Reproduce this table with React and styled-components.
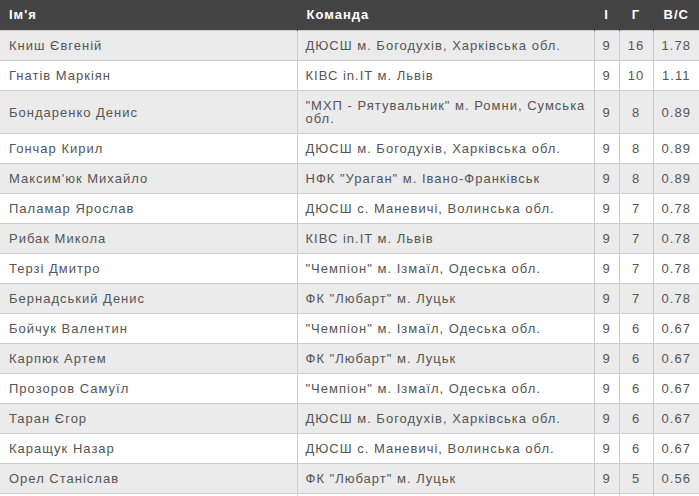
import React from 'react'
import styled, { createGlobalStyle } from 'styled-components'

const GlobalStyle = createGlobalStyle`
  body {
    margin: 0;
    background: #fff;
    font-family: "Liberation Sans", Arial, sans-serif;
  }
`

const Table = styled.table`
  width: 699px;
  table-layout: fixed;
  border-collapse: collapse;
  font-size: 13px;
  line-height: 13px;
  letter-spacing: 1px;
  color: #555;
`

const HeadCell = styled.th`
  background: #444;
  color: #fff;
  font-weight: bold;
  text-align: ${({ $center }) => ($center ? 'center' : 'left')};
  padding: ${({ $center }) => ($center ? '8px 0 9px' : '8px 8px 9px 9px')};
  height: 13px;
  border-left: 1px solid #444;
  &:first-child {
    border-left: none;
  }
`

const Row = styled.tr`
  background: ${({ $striped }) => ($striped ? '#ebebeb' : '#fff')};
`

const Cell = styled.td`
  padding: 8px 6px 8px 8px;
  height: 13px;
  border-top: 1px solid #ccc;
  border-bottom: 1px solid #ccc;
  border-left: 1px solid #ccc;
  vertical-align: middle;
  &:first-child {
    border-left: none;
    padding-left: 9px;
  }
`

const NumCell = styled(Cell)`
  text-align: center;
  padding-left: 0;
  padding-right: 0;
`

const rows = [
  ['Книш Євгеній', 'ДЮСШ м. Богодухів, Харківська обл.', 9, 16, '1.78'],
  ['Гнатів Маркіян', 'КІВС in.IT м. Львів', 9, 10, '1.11'],
  ['Бондаренко Денис', '"МХП - Рятувальник" м. Ромни, Сумська обл.', 9, 8, '0.89'],
  ['Гончар Кирил', 'ДЮСШ м. Богодухів, Харківська обл.', 9, 8, '0.89'],
  ["Максим'юк Михайло", 'НФК "Ураган" м. Івано-Франківськ', 9, 8, '0.89'],
  ['Паламар Ярослав', 'ДЮСШ с. Маневичі, Волинська обл.', 9, 7, '0.78'],
  ['Рибак Микола', 'КІВС in.IT м. Львів', 9, 7, '0.78'],
  ['Терзі Дмитро', '"Чемпіон" м. Ізмаїл, Одеська обл.', 9, 7, '0.78'],
  ['Бернадський Денис', 'ФК "Любарт" м. Луцьк', 9, 7, '0.78'],
  ['Бойчук Валентин', '"Чемпіон" м. Ізмаїл, Одеська обл.', 9, 6, '0.67'],
  ['Карпюк Артем', 'ФК "Любарт" м. Луцьк', 9, 6, '0.67'],
  ['Прозоров Самуїл', '"Чемпіон" м. Ізмаїл, Одеська обл.', 9, 6, '0.67'],
  ['Таран Єгор', 'ДЮСШ м. Богодухів, Харківська обл.', 9, 6, '0.67'],
  ['Каращук Назар', 'ДЮСШ с. Маневичі, Волинська обл.', 9, 6, '0.67'],
  ['Орел Станіслав', 'ФК "Любарт" м. Луцьк', 9, 5, '0.56'],
  ['Мельник Олег', 'ФК "Любарт" м. Луцьк', 9, 5, '0.56']
]

export default function App() {
  return (
    <>
      <GlobalStyle />
      <Table>
        <colgroup>
          <col style={{ width: 297 }} />
          <col style={{ width: 297 }} />
          <col style={{ width: 25 }} />
          <col style={{ width: 34 }} />
          <col style={{ width: 46 }} />
        </colgroup>
        <thead>
          <tr>
            <HeadCell>Ім'я</HeadCell>
            <HeadCell>Команда</HeadCell>
            <HeadCell $center>І</HeadCell>
            <HeadCell $center>Г</HeadCell>
            <HeadCell $center>В/С</HeadCell>
          </tr>
        </thead>
        <tbody>
          {rows.map(([name, team, games, goals, avg], i) => (
            <Row key={name} $striped={i % 2 === 0}>
              <Cell>{name}</Cell>
              <Cell>{team}</Cell>
              <NumCell>{games}</NumCell>
              <NumCell>{goals}</NumCell>
              <NumCell>{avg}</NumCell>
            </Row>
          ))}
        </tbody>
      </Table>
    </>
  )
}
